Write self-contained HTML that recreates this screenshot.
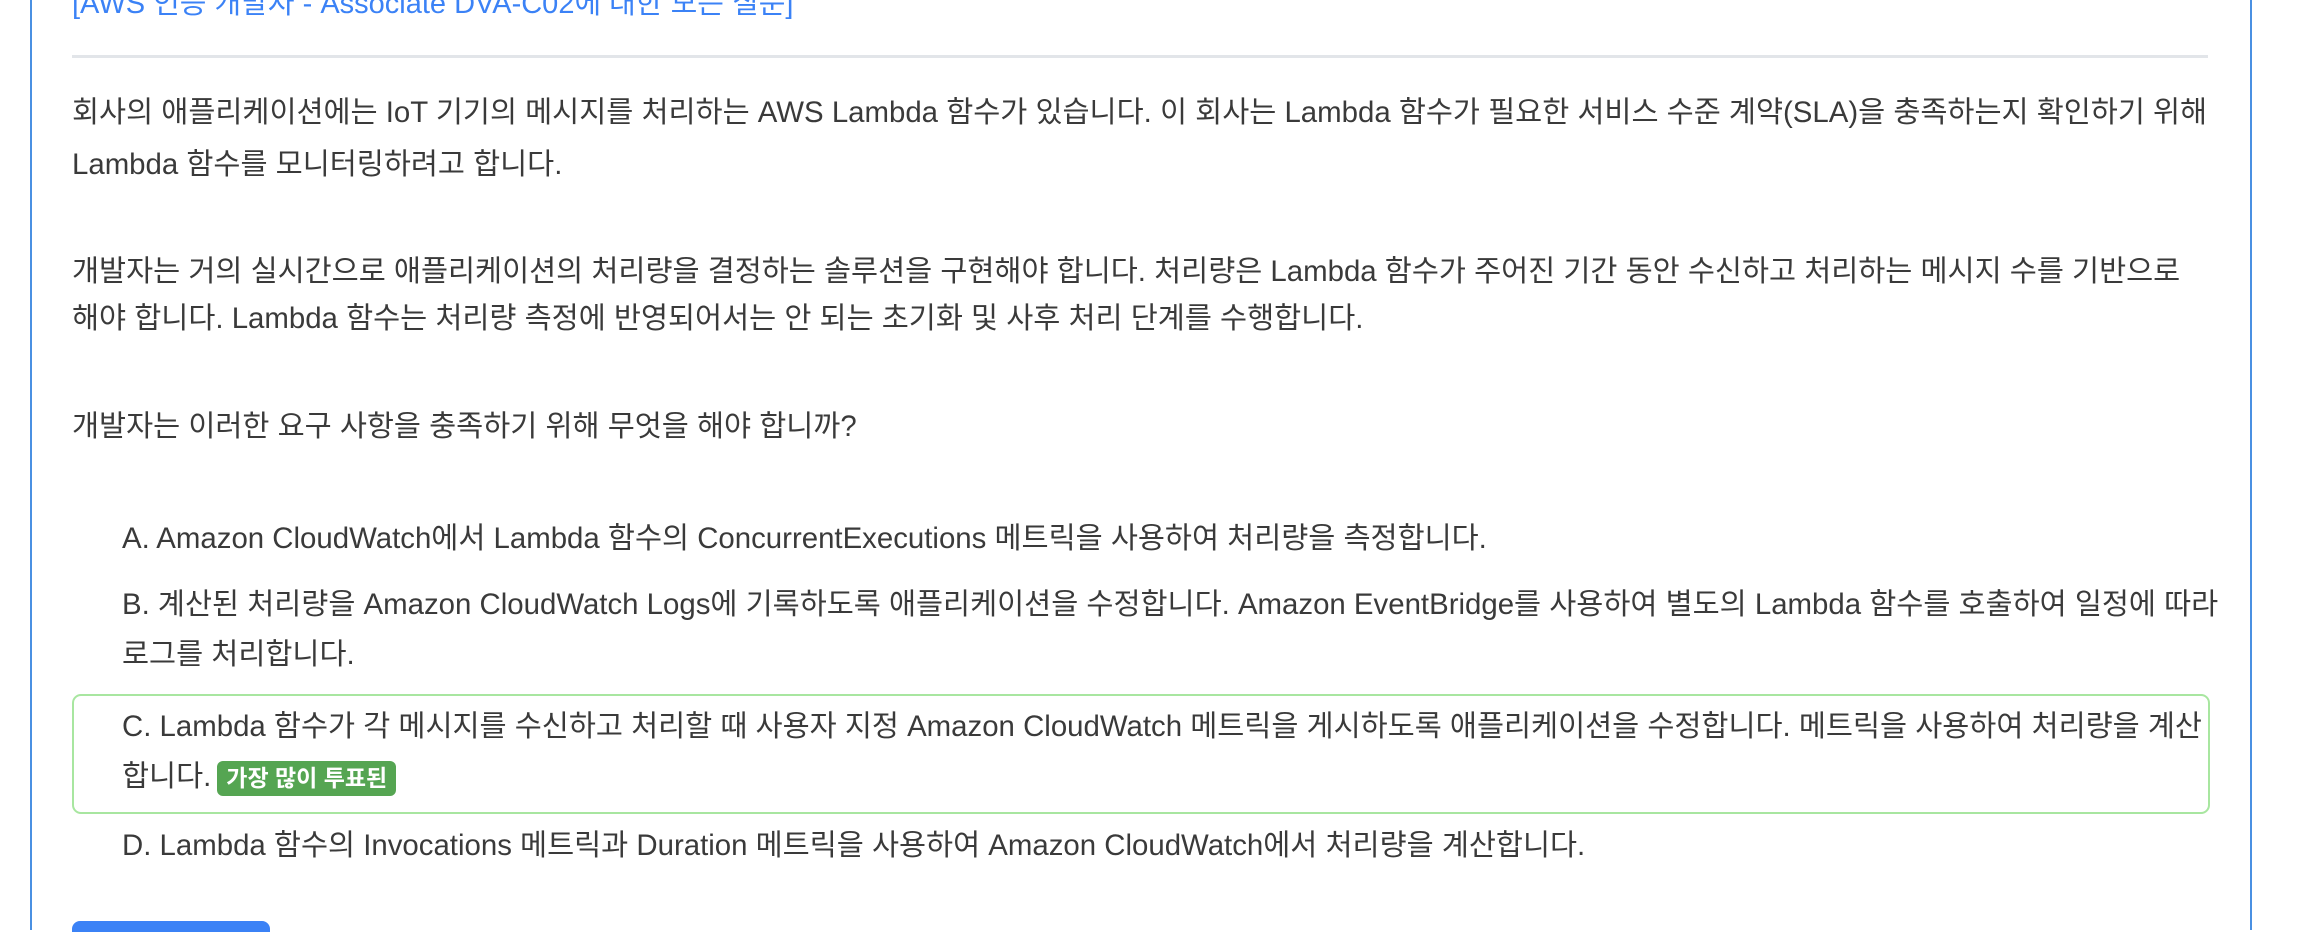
<!DOCTYPE html>
<html><head><meta charset="utf-8"><style>
html,body{margin:0;padding:0;background:#fff;width:2308px;height:932px;overflow:hidden}
body{font-family:"Liberation Sans","Noto Sans CJK KR",sans-serif;color:#3a3a3a;font-size:29.4px;position:relative}
.card{position:absolute;left:30px;top:-20px;width:2218px;height:950px;border-left:2px solid #4a90e2;border-right:2px solid #4a90e2}
.l{position:absolute;left:72px;white-space:nowrap;line-height:52px;height:52px}
.o{left:122px}
.hdr{position:absolute;left:72px;top:-20px;color:#3b82f6;font-size:29px;white-space:nowrap}
.div{position:absolute;left:72px;top:55px;width:2136px;height:3px;background:#e2e5e9}
.box{position:absolute;left:72px;top:694px;width:2134px;height:116px;border:2px solid #a8e6a0;border-radius:9px}
.badge{display:inline-block;background:#55a552;color:#fff;font-weight:bold;font-size:23px;line-height:35px;padding:0 9px;border-radius:6px;vertical-align:middle;margin-left:6px}
.btn{position:absolute;left:72px;top:921px;width:198px;height:11px;background:#3b82f6;border-radius:8px 8px 0 0}
</style></head><body>
<div class="card"></div>
<div class="hdr">[AWS 인증 개발자 - Associate DVA-C02에 대한 모든 질문]</div>
<div class="div"></div>
<div class="l" style="top:87px">회사의 애플리케이션에는 IoT 기기의 메시지를 처리하는 AWS Lambda 함수가 있습니다. 이 회사는 Lambda 함수가 필요한 서비스 수준 계약(SLA)을 충족하는지 확인하기 위해</div>
<div class="l" style="top:139px">Lambda 함수를 모니터링하려고 합니다.</div>
<div class="l" style="top:246px">개발자는 거의 실시간으로 애플리케이션의 처리량을 결정하는 솔루션을 구현해야 합니다. 처리량은 Lambda 함수가 주어진 기간 동안 수신하고 처리하는 메시지 수를 기반으로</div>
<div class="l" style="top:293px">해야 합니다. Lambda 함수는 처리량 측정에 반영되어서는 안 되는 초기화 및 사후 처리 단계를 수행합니다.</div>
<div class="l" style="top:401px">개발자는 이러한 요구 사항을 충족하기 위해 무엇을 해야 합니까?</div>
<div class="l o" style="top:513px">A. Amazon CloudWatch에서 Lambda 함수의 ConcurrentExecutions 메트릭을 사용하여 처리량을 측정합니다.</div>
<div class="l o" style="top:579px">B. 계산된 처리량을 Amazon CloudWatch Logs에 기록하도록 애플리케이션을 수정합니다. Amazon EventBridge를 사용하여 별도의 Lambda 함수를 호출하여 일정에 따라</div>
<div class="l o" style="top:629px">로그를 처리합니다.</div>
<div class="box"></div>
<div class="l o" style="top:701px">C. Lambda 함수가 각 메시지를 수신하고 처리할 때 사용자 지정 Amazon CloudWatch 메트릭을 게시하도록 애플리케이션을 수정합니다. 메트릭을 사용하여 처리량을 계산</div>
<div class="l o" style="top:751px">합니다.<span class="badge">가장 많이 투표된</span></div>
<div class="l o" style="top:820px">D. Lambda 함수의 Invocations 메트릭과 Duration 메트릭을 사용하여 Amazon CloudWatch에서 처리량을 계산합니다.</div>
<div class="btn"></div>
</body></html>
